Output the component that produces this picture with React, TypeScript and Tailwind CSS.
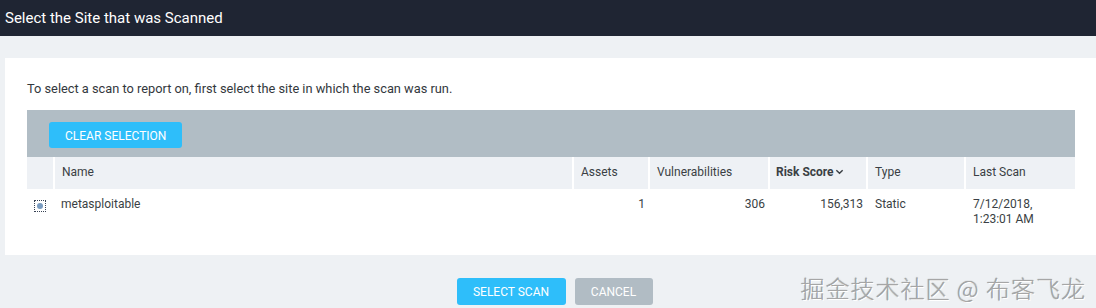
import * as React from "react";

const columns = [
  { key: "name", label: "Name", width: "w-[519px]" },
  { key: "assets", label: "Assets", width: "w-[76px]" },
  { key: "vulns", label: "Vulnerabilities", width: "w-[120px]" },
  { key: "risk", label: "Risk Score", width: "w-[98px]" },
  { key: "type", label: "Type", width: "w-[98px]" },
  { key: "last", label: "Last Scan", width: "w-[110px]" },
];

const sites = [
  {
    name: "metasploitable",
    assets: "1",
    vulns: "306",
    risk: "156,313",
    type: "Static",
    last: ["7/12/2018,", "1:23:01 AM"],
  },
];

function RowSelect() {
  return (
    <span className="flex h-[12px] w-[12px] items-center justify-center border border-dotted border-gray-700">
      <span className="h-[6px] w-[6px] rounded-full bg-[#7a9cc0]" />
    </span>
  );
}

export default function App() {
  return (
    <div
      className="relative flex h-[308px] w-[1096px] flex-col overflow-hidden bg-[#eef1f4] text-[#3a3f44]"
      style={{ fontFamily: "Roboto, 'Liberation Sans', sans-serif" }}
    >
      <div className="flex h-[36px] shrink-0 items-center bg-[#1f2533] pl-[5px] text-[15px] text-white">
        Select the Site that was Scanned
      </div>

      <div className="ml-[5px] mt-[22px] h-[197px] bg-white pl-[22px] pr-[21px]">
        <p className="pt-[22px] text-[12.8px] leading-[18px] text-[#33383d]">
          To select a scan to report on, first select the site in which the scan was run.
        </p>

        <div className="mt-[12px] flex h-[47px] items-start bg-[#b1bdc5] pl-[22px] pt-[12px]">
          <button className="h-[26px] rounded-[3px] bg-[#2ebefa] px-[16px] pt-[1px] text-[12px] text-white">
            CLEAR SELECTION
          </button>
        </div>

        <table className="w-full table-fixed border-collapse text-[12px]">
          <thead>
            <tr className="h-[32px] bg-[#eef1f5] text-[#3a3f44]">
              <th className="w-[27px]" />
              {columns.map((col) => (
                <th
                  key={col.key}
                  className={`${col.width} border-l-2 border-white pb-[3px] pl-[7px] text-left align-middle ${
                    col.key === "risk" ? "font-bold" : "font-normal"
                  }`}
                >
                  {col.key === "risk" ? (
                    <span className="-ml-[1px] inline-flex items-center">
                      {col.label}
                      <svg viewBox="0 0 10 10" className="ml-[1px] h-[9px] w-[9px]">
                        <path d="M1.5 3.5 5 7l3.5-3.5" fill="none" stroke="#3a3f44" strokeWidth="1.6" />
                      </svg>
                    </span>
                  ) : (
                    col.label
                  )}
                </th>
              ))}
            </tr>
          </thead>
          <tbody>
            {sites.map((site) => (
              <tr key={site.name} className="align-top leading-[15px]">
                <td className="pl-[7px] pt-[11px]">
                  <RowSelect />
                </td>
                <td className="pl-[7px] pt-[8px]">{site.name}</td>
                <td className="pr-[4px] pt-[8px] text-right">{site.assets}</td>
                <td className="pr-[4px] pt-[8px] text-right">{site.vulns}</td>
                <td className="pr-[4px] pt-[8px] text-right">{site.risk}</td>
                <td className="pl-[8px] pt-[8px]">{site.type}</td>
                <td className="pl-[8px] pt-[8px]">
                  {site.last.map((line) => (
                    <div key={line}>{line}</div>
                  ))}
                </td>
              </tr>
            ))}
          </tbody>
        </table>
      </div>

      <div className="mt-[23px] flex justify-center gap-[9px] pl-[13px]">
        <button className="h-[27px] w-[109px] rounded-[3px] bg-[#2ebefa] text-[12px] text-white">
          SELECT SCAN
        </button>
        <button className="h-[27px] w-[78px] rounded-[3px] bg-[#b1bcc4] text-[12px] text-white">
          CANCEL
        </button>
      </div>

      <div
        className="absolute right-[10px] top-[273px] text-[24px] font-light leading-[30px] tracking-[1px] text-[#a6a6a6]"
        style={{
          fontFamily: "'Noto Sans CJK SC', sans-serif",
          textShadow: "1px 1px 0 #ffffff, 0 0 1px #7a7a7a",
        }}
      >
        掘金技术社区 @ 布客飞龙
      </div>
    </div>
  );
}
